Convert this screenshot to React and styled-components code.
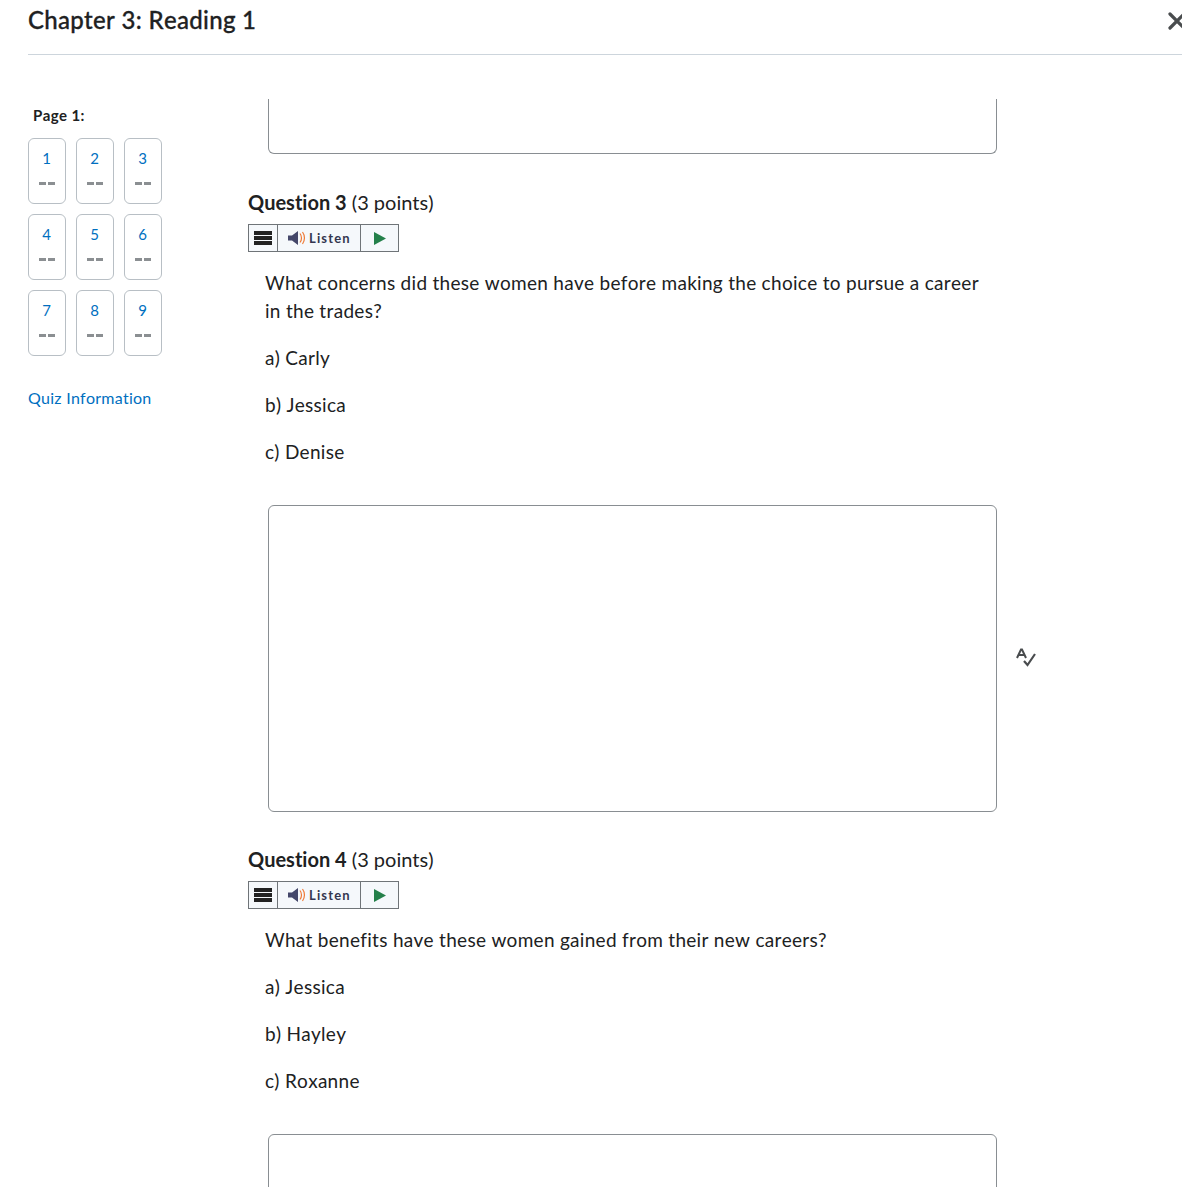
import React from "react";
import styled, { createGlobalStyle } from "styled-components";

const Global = createGlobalStyle`
  html, body { margin: 0; padding: 0; background: #fff; }
  body { font-family: Lato, "Noto Sans", sans-serif; color: #202122; height: 1187px; overflow: hidden; font-variant-ligatures: none; font-kerning: none; }
`;
const Page = styled.div`width: 1182px; height: 1187px; overflow: hidden; padding-left: 28px; box-sizing: border-box;`;
const Header = styled.header`
  height: 54px; border-bottom: 1px solid #cdd5dc; display: flex; justify-content: space-between; align-items: flex-start; overflow: hidden;
`;
const Title = styled.h1`margin: 0; padding-top: 5px; font-size: 24px; line-height: 30px; font-weight: 500; letter-spacing: 0.3px; -webkit-text-stroke: 0.3px #202122;`;
const Close = styled.svg`width: 18px; height: 18px; flex: none; margin-top: 12px; margin-right: -4px; color: #494c4e;`;
const Body = styled.div`display: flex; padding-top: 44px;`;
const Side = styled.aside`width: 220px; flex: none; padding-top: 6px;`;
const PageLabel = styled.div`margin-left: 5px; font-size: 15px; line-height: 20px; font-weight: 700; letter-spacing: 0.4px; margin-bottom: 13px;`;
const Grid = styled.div`display: grid; grid-template-columns: repeat(3, 38px); column-gap: 10px; row-gap: 10px;`;
const Cell = styled.div`
  width: 38px; height: 66px; box-sizing: border-box; border: 1px solid #b8bfc5; border-radius: 6px;
  display: flex; flex-direction: column; align-items: center; padding: 10px 1px 0 0;
`;
const Num = styled.span`font-size: 15px; line-height: 18px; color: #006fbf;`;
const Dash = styled.span`display: flex; gap: 2px; margin-top: 15px;`;
const DashBit = styled.i`display: block; width: 7px; height: 3px; background: #8b8f92;`;
const InfoLink = styled.a`display: block; margin-top: 32px; font-size: 16px; line-height: 20px; letter-spacing: 0.25px; color: #006fbf;`;
const Main = styled.main`flex: none; width: 760px;`;
const TopBox = styled.div`
  width: 729px; height: 55px; margin-left: 20px; box-sizing: border-box;
  border: 1px solid #898e92; border-top: 0; border-radius: 0 0 6px 6px;
`;
const QTitle = styled.h2`margin: 0; font-size: 20px; line-height: 24px; font-weight: 400; color: #202122;`;
const QStrong = styled.strong`font-weight: 700;`;
const Question = styled.section`padding-top: ${p => p.$top}px;`;
const Listen = styled.div`
  display: inline-flex; height: 28px; box-sizing: border-box; margin-top: 10px; border: 1px solid #6f7478; background: #f5f8fb; vertical-align: top;
`;
const Menu = styled.div`width: 29px; border-right: 1px solid #6f7478; display: flex; align-items: center; justify-content: center; box-sizing: border-box;`;
const ListenBtn = styled.div`
  width: 83px; box-sizing: border-box; border-right: 1px solid #6f7478; display: flex; align-items: center; padding-left: 10px; gap: 1px;
  font-size: 13px; font-weight: 700; letter-spacing: 1.15px; color: #33364f;
`;
const Play = styled.div`width: 37px; display: flex; align-items: center; justify-content: center;`;
const Prose = styled.div`padding-left: 17px; width: 730px; font-size: 19px; line-height: 28px; letter-spacing: 0.29px; color: #202122; padding-top: 17px;`;
const P = styled.p`margin: 0 0 19px;`;
const AnswerRow = styled.div`position: relative; margin-left: 20px; margin-top: ${p => p.$top}px;`;
const Box = styled.div`
  width: 729px; height: ${p => p.$h}px; box-sizing: border-box; border: 1px solid #898e92; border-radius: 6px;
`;
const Spell = styled.svg`position: absolute; left: 747px; top: 142px; width: 22px; height: 22px; color: #494c4e;`;

const MenuIcon = () => (
  <svg width="18" height="14" viewBox="0 0 18 14"><path d="M0 0h18v4H0zM0 5h18v4H0zM0 10h18v4H0z" fill="#222" /></svg>
);
const SpeakerIcon = () => (
  <svg width="20" height="14" viewBox="0 0 20 14">
    <path d="M0 4.500h4L10 0v14L4 9.500H0z" fill="#44476a" />
    <path d="M12 2.500c2 2.500 2 6.500 0 9M14.500 1c2.600 3.500 2.600 8.500 0 12" fill="none" stroke="#ef7a35" strokeWidth="1.2" />
  </svg>
);
const PlayIcon = () => (
  <svg width="12" height="13" viewBox="0 0 12 13"><path d="M0 0l12 6.500L0 13z" fill="#24804a" /></svg>
);
const ListenBar = () => (
  <Listen>
    <Menu><MenuIcon /></Menu>
    <ListenBtn><SpeakerIcon />Listen</ListenBtn>
    <Play><PlayIcon /></Play>
  </Listen>
);
const nums = [1, 2, 3, 4, 5, 6, 7, 8, 9];

export default function App() {
  return (
    <Page>
      <Global />
      <Header>
        <Title>Chapter 3: Reading 1</Title>
        <Close viewBox="0 0 18 18"><path d="M2 2l14 14M16 2L2 16" stroke="currentColor" strokeWidth="3.200" strokeLinecap="round" fill="none" /></Close>
      </Header>
      <Body>
        <Side>
          <PageLabel>Page 1:</PageLabel>
          <Grid>
            {nums.map(n => (
              <Cell key={n}><Num>{n}</Num><Dash><DashBit /><DashBit /></Dash></Cell>
            ))}
          </Grid>
          <InfoLink>Quiz Information</InfoLink>
        </Side>
        <Main>
          <TopBox />
          <Question $top={36}>
            <QTitle><QStrong>Question 3</QStrong> (3 points)</QTitle>
            <ListenBar />
            <Prose>
              <P>What concerns did these women have before making the choice to pursue a career in the trades?</P>
              <P>a) Carly</P>
              <P>b) Jessica</P>
              <P>c) Denise</P>
            </Prose>
          </Question>
          <AnswerRow $top={39}>
            <Box $h={307} />
            <Spell viewBox="0 0 22 22" fill="none" stroke="currentColor">
              <path d="M2 11L6 2.500h1L11 11M3.500 8h6" strokeWidth="2" />
              <path d="M9 14l3.500 4L20 7" strokeWidth="2.200" />
            </Spell>
          </AnswerRow>
          <Question $top={35}>
            <QTitle><QStrong>Question 4</QStrong> (3 points)</QTitle>
            <ListenBar />
            <Prose>
              <P>What benefits have these women gained from their new careers?</P>
              <P>a) Jessica</P>
              <P>b) Hayley</P>
              <P>c) Roxanne</P>
            </Prose>
          </Question>
          <AnswerRow $top={39}>
            <Box $h={307} />
          </AnswerRow>
        </Main>
      </Body>
    </Page>
  );
}
